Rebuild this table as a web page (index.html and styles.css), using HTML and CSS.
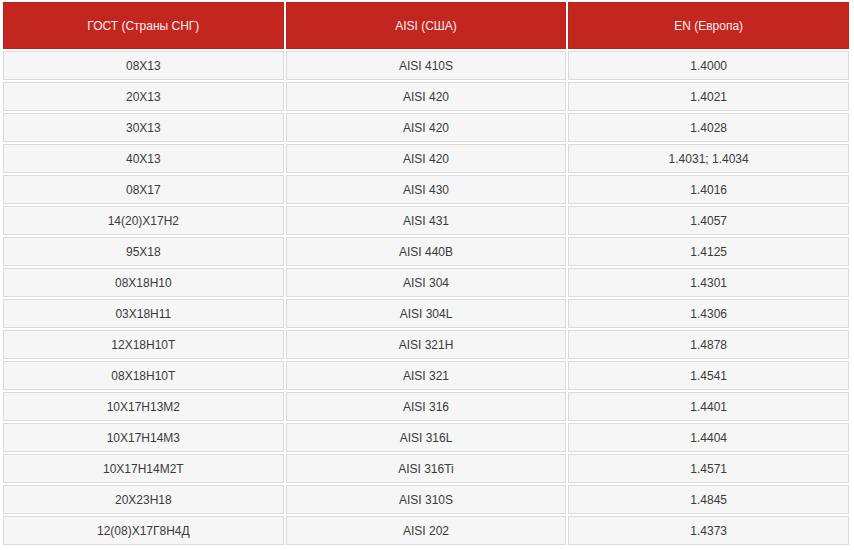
FILE: index.html
```html
<!DOCTYPE html>
<html lang="ru">
<head>
<meta charset="utf-8">
<title>Таблица соответствия марок стали</title>
<link rel="stylesheet" href="styles.css">
</head>
<body>
<table class="steel">
  <thead>
    <tr><th>ГОСТ (Страны СНГ)</th><th>AISI (США)</th><th>EN (Европа)</th></tr>
  </thead>
  <tbody>
    <tr><td>08Х13</td><td>AISI 410S</td><td>1.4000</td></tr>
    <tr><td>20Х13</td><td>AISI 420</td><td>1.4021</td></tr>
    <tr><td>30Х13</td><td>AISI 420</td><td>1.4028</td></tr>
    <tr><td>40Х13</td><td>AISI 420</td><td>1.4031; 1.4034</td></tr>
    <tr><td>08Х17</td><td>AISI 430</td><td>1.4016</td></tr>
    <tr><td>14(20)Х17Н2</td><td>AISI 431</td><td>1.4057</td></tr>
    <tr><td>95Х18</td><td>AISI 440B</td><td>1.4125</td></tr>
    <tr><td>08Х18Н10</td><td>AISI 304</td><td>1.4301</td></tr>
    <tr><td>03Х18Н11</td><td>AISI 304L</td><td>1.4306</td></tr>
    <tr><td>12Х18Н10Т</td><td>AISI 321H</td><td>1.4878</td></tr>
    <tr><td>08Х18Н10Т</td><td>AISI 321</td><td>1.4541</td></tr>
    <tr><td>10Х17Н13М2</td><td>AISI 316</td><td>1.4401</td></tr>
    <tr><td>10Х17Н14М3</td><td>AISI 316L</td><td>1.4404</td></tr>
    <tr><td>10Х17Н14М2Т</td><td>AISI 316Ti</td><td>1.4571</td></tr>
    <tr><td>20Х23Н18</td><td>AISI 310S</td><td>1.4845</td></tr>
    <tr><td>12(08)Х17Г8Н4Д</td><td>AISI 202</td><td>1.4373</td></tr>
  </tbody>
</table>
</body>
</html>
```
FILE: styles.css
```css
html, body {
  margin: 0;
  padding: 0;
  background: #ffffff;
}
body {
  padding-left: 1px;
  font-family: "Liberation Sans", Arial, sans-serif;
}
.steel {
  width: 850px;
  border-collapse: separate;
  border-spacing: 2px;
  table-layout: fixed;
  font-size: 12px;
}
.steel th {
  height: 47px;
  box-sizing: border-box;
  background: #c3261f;
  border: 1px solid #b8221b;
  color: #fdeeee;
  font-weight: normal;
  text-align: center;
  vertical-align: middle;
  padding: 0;
}
.steel td {
  height: 29px;
  box-sizing: border-box;
  background: #f6f6f6;
  border: 1px solid #dadada;
  color: #3a3a3a;
  text-align: center;
  vertical-align: middle;
  padding: 0;
}
```
